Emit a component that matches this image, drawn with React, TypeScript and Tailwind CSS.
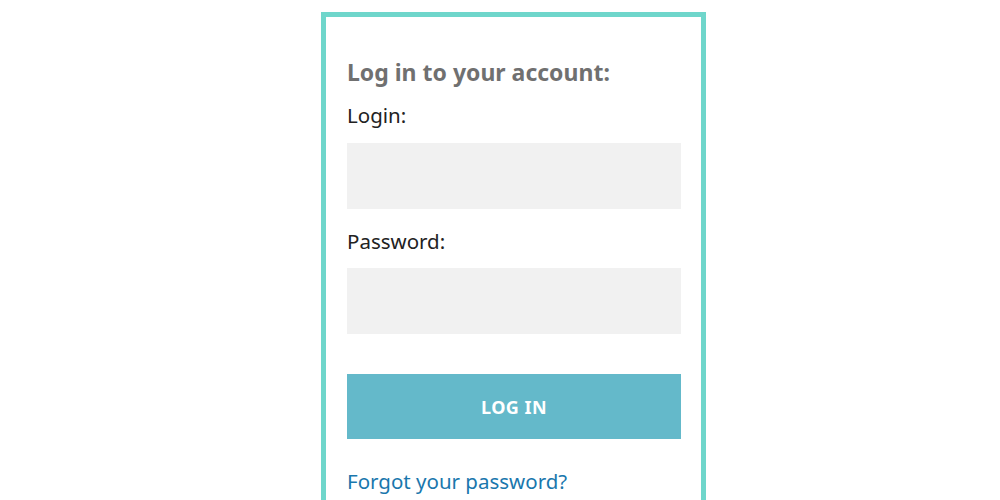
export default function App() {
  return (
    <div className="w-[1000px] h-[500px] overflow-hidden bg-white" style={{ fontFamily: '"Noto Sans", "Open Sans", sans-serif' }}>
      <div className="ml-[321px] mt-3 w-[385px] border-[5px] border-[#6fd6cb] px-[21px] pr-5 pt-10 pb-10">
        <h2 className="text-[23px] leading-[30px] font-bold text-[#707070]">Log in to your account:</h2>
        <label className="block mt-[14px] text-[20.5px] leading-[28px] text-[#222]">Login:</label>
        <div className="mt-[14px] h-[66px] bg-[#f1f1f1]" />
        <label className="block mt-[18px] text-[20.5px] leading-[28px] text-[#222]">Password:</label>
        <div className="mt-[13px] h-[66px] bg-[#f1f1f1]" />
        <button className="mt-10 w-full h-[65px] bg-[#64b9ca] text-white text-lg font-bold tracking-wide">LOG IN</button>
        <a className="block mt-7 text-[20.5px] leading-[28px] text-[#1a77ad]">Forgot your password?</a>
      </div>
    </div>
  );
}
